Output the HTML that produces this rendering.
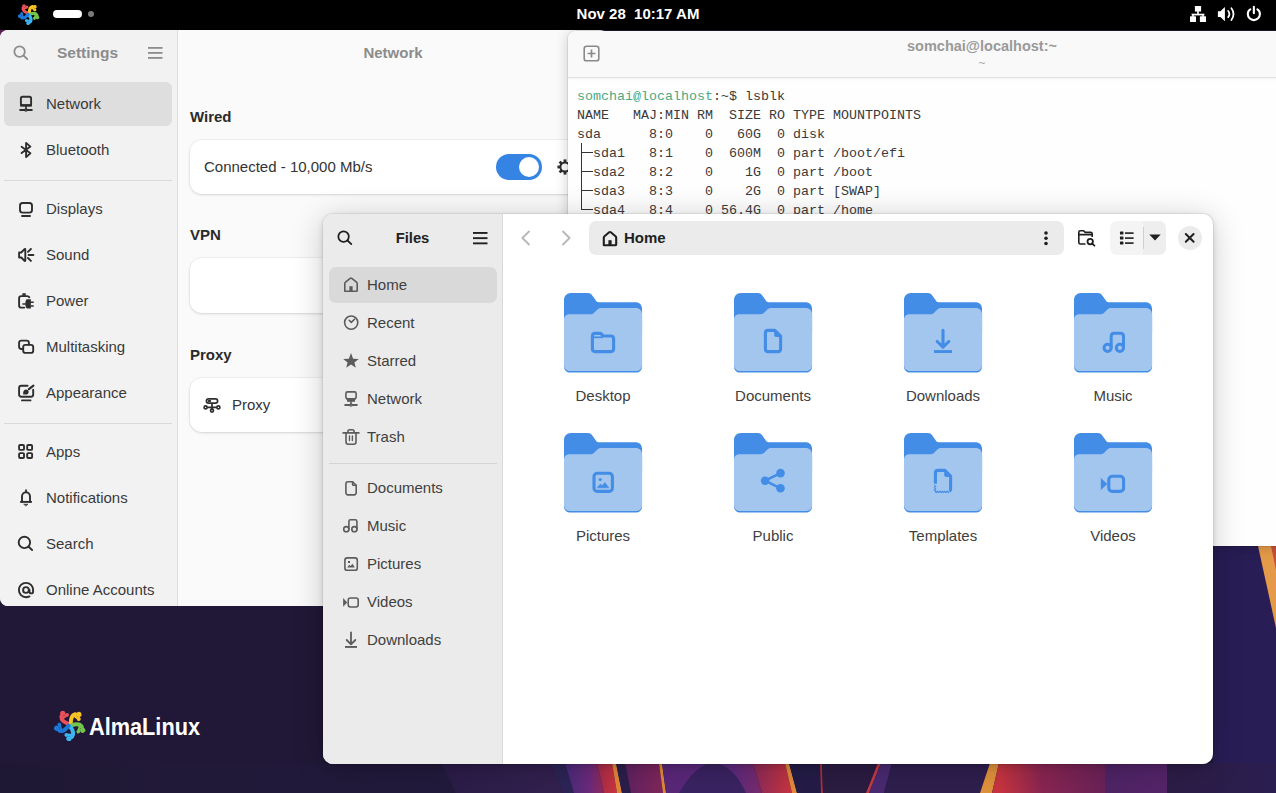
<!DOCTYPE html>
<html><head><meta charset="utf-8"><style>
*{margin:0;padding:0;box-sizing:border-box}
html,body{width:1276px;height:793px;overflow:hidden;background:#211838;font-family:"Liberation Sans",sans-serif;color:#2e2e2e}
.a{position:absolute}
#wall{left:0;top:0;width:1276px;height:793px;overflow:hidden}
#topbar{left:0;top:0;width:1276px;height:30px;background:#000}
#clock{left:0;width:1276px;top:5px;text-align:center;color:#fff;font-weight:bold;font-size:15px;line-height:18px;white-space:pre;padding-left:0}
#set{left:0;top:30px;width:608px;height:576px;background:#fafafa;border-radius:8px;overflow:hidden}
#setside{left:0;top:0;width:178px;height:576px;background:#f2f2f2;border-right:1px solid #dddddd}
.t15{font-size:15px;white-space:nowrap}
.sep{height:1px;background:#d9d9d9}
.card{background:#fff;border-radius:12px;box-shadow:0 0 0 1px rgba(0,0,0,.03),0 1px 3px rgba(0,0,0,.12)}
#term{left:568px;top:31px;width:830px;height:515px;background:#fefefe;border-radius:8px 8px 0 0;overflow:hidden;box-shadow:0 0 0 1px rgba(0,0,0,.07),0 1px 14px rgba(0,0,0,.2)}
#termhead{left:0;top:0;width:830px;height:47px;background:#f9f9f9;border-bottom:1px solid #e0e0e0;box-shadow:0 1px 3px rgba(0,0,0,.05);z-index:1}
#termtxt{left:9px;top:56px;font-family:"Liberation Mono",monospace;font-size:13.333px;line-height:19px;white-space:pre;color:#3a3a3a}
#files{left:323px;top:213.7px;width:890px;height:550.3px;background:#fff;border-radius:10px;overflow:hidden;box-shadow:0 0 0 1px rgba(0,0,0,.06),0 2px 6px rgba(0,0,0,.12),0 4px 32px rgba(0,0,0,.2)}
#fside{left:0;top:0;width:180px;height:550px;background:#ebebeb;border-right:1px solid #dadada}
.flbl{width:170px;text-align:center;font-size:15px;line-height:18px;color:#404040}
</style></head><body>
<div id="wall" class="a">
<svg class="a" style="left:0;top:0" width="1276" height="793" viewBox="0 0 1276 793"><defs><linearGradient id="g1" gradientUnits="userSpaceOnUse" x1="0" y1="0" x2="450" y2="0"><stop offset="0" stop-color="#1f1834"/><stop offset="1" stop-color="#221a3c"/></linearGradient><linearGradient id="g2" gradientUnits="userSpaceOnUse" x1="445" y1="0" x2="560" y2="0"><stop offset="0" stop-color="#2a1c48"/><stop offset="1" stop-color="#33204f"/></linearGradient><linearGradient id="g3" gradientUnits="userSpaceOnUse" x1="566" y1="0" x2="604" y2="0"><stop offset="0" stop-color="#4a2a7a"/><stop offset="0.6" stop-color="#6a2a7c"/><stop offset="1" stop-color="#92295c"/></linearGradient><linearGradient id="g4" gradientUnits="userSpaceOnUse" x1="600" y1="0" x2="616" y2="0"><stop offset="0" stop-color="#a82c4c"/><stop offset="1" stop-color="#cc343e"/></linearGradient><linearGradient id="g5" gradientUnits="userSpaceOnUse" x1="625" y1="0" x2="663" y2="0"><stop offset="0" stop-color="#5e2262"/><stop offset="1" stop-color="#82265a"/></linearGradient><linearGradient id="g6" gradientUnits="userSpaceOnUse" x1="662" y1="0" x2="762" y2="0"><stop offset="0" stop-color="#5a2778"/><stop offset="0.7" stop-color="#5c2a80"/><stop offset="1" stop-color="#7a2a6a"/></linearGradient><linearGradient id="g7" gradientUnits="userSpaceOnUse" x1="753" y1="0" x2="792" y2="0"><stop offset="0" stop-color="#8a2a5a"/><stop offset="1" stop-color="#c8343f"/></linearGradient><linearGradient id="g8" gradientUnits="userSpaceOnUse" x1="1000" y1="0" x2="1105" y2="0"><stop offset="0" stop-color="#c8343f"/><stop offset="0.4" stop-color="#8a2552"/><stop offset="1" stop-color="#6a2258"/></linearGradient><linearGradient id="g9" gradientUnits="userSpaceOnUse" x1="1105" y1="0" x2="1167" y2="0"><stop offset="0" stop-color="#4e2466"/><stop offset="1" stop-color="#55246a"/></linearGradient><linearGradient id="g10" gradientUnits="userSpaceOnUse" x1="1167" y1="0" x2="1276" y2="0"><stop offset="0" stop-color="#2c1d46"/><stop offset="1" stop-color="#2a1e50"/></linearGradient></defs><rect width="1276" height="793" fill="#201836"/><rect x="0" y="28" width="10" height="12" fill="#5a1f55"/><path d="M0 763 L441 763 L456 793 L0 793Z" fill="url(#g1)"/><path d="M441 763 L550 763 L563 793 L456 793Z" fill="url(#g2)"/><path d="M550 763 L565 763 L574 793 L563 793Z" fill="#2c2456"/><path d="M565 763 L597 763 L604 793 L574 793Z" fill="url(#g3)"/><path d="M597 763 L612 763 L617 793 L604 793Z" fill="url(#g4)"/><path d="M612 763 L616 763 L622 793 L617 793Z" fill="#e5863c"/><path d="M616 763 L625 763 L631 793 L622 793Z" fill="#2a1f4c"/><path d="M625 763 L659 763 L663 793 L631 793Z" fill="url(#g5)"/><path d="M659 763 L662 763 L666 793 L663 793Z" fill="#e08a3c"/><path d="M662 763 L753 763 L762 793 L666 793Z" fill="url(#g6)"/><path d="M753 763 L785 763 L792 793 L762 793Z" fill="url(#g7)"/><path d="M785 763 L789 763 L797 793 L792 793Z" fill="#e38a3c"/><path d="M789 763 L820 763 L821 793 L797 793Z" fill="#241c48"/><path d="M820 763 L822 763 L823 793 L821 793Z" fill="#a83242"/><path d="M822 763 L878 763 L866 793 L823 793Z" fill="#2b1c42"/><path d="M878 763 L881 763 L869 793 L866 793Z" fill="#c23a44"/><path d="M881 763 L892 763 L884 793 L869 793Z" fill="#4a2a72"/><path d="M892 763 L990 763 L980 793 L884 793Z" fill="#2e1f4e"/><path d="M990 763 L999 763 L992 793 L980 793Z" fill="#e0923c"/><path d="M999 763 L1105 763 L1105 793 L992 793Z" fill="url(#g8)"/><path d="M1105 763 L1167 763 L1167 793 L1105 793Z" fill="url(#g9)"/><path d="M1167 763 L1276 763 L1276 793 L1167 793Z" fill="url(#g10)"/><path d="M679 793C690 775 700 764 712 763C726 763 738 775 746 793Z" fill="#3a2362"/><path d="M1213 546 L1276 546 L1276 763 L1213 763Z" fill="#281d55"/><path d="M1258 546 L1276 546 L1276 628Z" fill="#e49a48"/><path d="M1271 546 L1276 546 L1276 570Z" fill="#c8503c"/></svg>
<svg class="a" style="left:54.2px;top:709.2px" width="32.0" height="32.0" viewBox="-16 -16 32 32"><g transform="rotate(0)" fill="#e9525a" stroke="#e9525a"><path d="M-1 -1.2C-4.6 -2.2 -8.8 -4 -8.6 -8.4" fill="none" stroke-width="3.9599999999999995" stroke-linecap="round"/><path d="M-7.6 -6.8L-3.4 -9.6" fill="none" stroke-width="2.4" stroke-linecap="round"/><circle cx="-2.9" cy="-10.2" r="1.92" stroke="none"/><circle cx="-7.2" cy="-11.7" r="2.64" stroke="none"/></g><g transform="rotate(72)" fill="#f7c326" stroke="#f7c326"><path d="M-1 -1.2C-4.6 -2.2 -8.8 -4 -8.6 -8.4" fill="none" stroke-width="3.9599999999999995" stroke-linecap="round"/><path d="M-7.6 -6.8L-3.4 -9.6" fill="none" stroke-width="2.4" stroke-linecap="round"/><circle cx="-2.9" cy="-10.2" r="1.92" stroke="none"/><circle cx="-7.2" cy="-11.7" r="2.64" stroke="none"/></g><g transform="rotate(144)" fill="#73c54b" stroke="#73c54b"><path d="M-1 -1.2C-4.6 -2.2 -8.8 -4 -8.6 -8.4" fill="none" stroke-width="3.9599999999999995" stroke-linecap="round"/><path d="M-7.6 -6.8L-3.4 -9.6" fill="none" stroke-width="2.4" stroke-linecap="round"/><circle cx="-2.9" cy="-10.2" r="1.92" stroke="none"/><circle cx="-7.2" cy="-11.7" r="2.64" stroke="none"/></g><g transform="rotate(216)" fill="#3cb5f0" stroke="#3cb5f0"><path d="M-1 -1.2C-4.6 -2.2 -8.8 -4 -8.6 -8.4" fill="none" stroke-width="3.9599999999999995" stroke-linecap="round"/><path d="M-7.6 -6.8L-3.4 -9.6" fill="none" stroke-width="2.4" stroke-linecap="round"/><circle cx="-2.9" cy="-10.2" r="1.92" stroke="none"/><circle cx="-7.2" cy="-11.7" r="2.64" stroke="none"/></g><g transform="rotate(288)" fill="#1d78d8" stroke="#1d78d8"><path d="M-1 -1.2C-4.6 -2.2 -8.8 -4 -8.6 -8.4" fill="none" stroke-width="3.9599999999999995" stroke-linecap="round"/><path d="M-7.6 -6.8L-3.4 -9.6" fill="none" stroke-width="2.4" stroke-linecap="round"/><circle cx="-2.9" cy="-10.2" r="1.92" stroke="none"/><circle cx="-7.2" cy="-11.7" r="2.64" stroke="none"/></g></svg>
<div class="a" style="left:89px;top:714px;font-weight:bold;font-size:23px;line-height:26px;color:#fff;transform:scaleX(0.944);transform-origin:0 0;letter-spacing:0">AlmaLinux</div>
</div>
<div id="set" class="a">
<div id="setside" class="a">
<svg class="a" style="left:11px;top:13px" width="20" height="20" viewBox="0 0 24 24" fill="none" stroke="#8c8c8c" stroke-width="2.1" stroke-linecap="round" stroke-linejoin="round" ><circle cx="10.3" cy="10.3" r="6.3"/><path d="M15 15L19.6 19.4"/></svg>
<div class="a" style="left:0;width:175px;top:14px;text-align:center;font-weight:bold;font-size:15.5px;line-height:18px;color:#8c8c8c">Settings</div>
<svg class="a" style="left:148px;top:17px" width="15" height="12" viewBox="0 0 15 12" fill="#8c8c8c"><rect x="0" y="0" width="14.5" height="1.8"/><rect x="0" y="5" width="14.5" height="1.8"/><rect x="0" y="10" width="14.5" height="1.8"/></svg>
<div class="a" style="left:4px;top:52px;width:168px;height:43.6px;background:#dedede;border-radius:6px"></div>
<div class="a sep" style="left:4px;top:150px;width:168px"></div>
<div class="a sep" style="left:4px;top:393px;width:168px"></div>
<svg class="a" style="left:14px;top:62px" width="24" height="24" viewBox="0 0 24 24" fill="none" stroke="#2e2e2e" stroke-width="1.9" stroke-linecap="round" stroke-linejoin="round" ><rect x="6.9" y="4.8" width="10.2" height="8.8" rx="1.6"/><rect x="6" y="12.1" width="12" height="2.3" fill="#2e2e2e" stroke="none"/><path d="M12 14.5V17.2" stroke-width="1.6"/><path d="M6.2 18H10.6M13.4 18H17.8" stroke-width="2"/><circle cx="12" cy="18" r="1.2" stroke-width="1.2"/></svg>
<div class="a t15" style="left:46px;top:65px;line-height:18px;color:#3a3a3a">Network</div>
<svg class="a" style="left:14px;top:108px" width="24" height="24" viewBox="0 0 24 24" fill="none" stroke="#2e2e2e" stroke-width="1.9" stroke-linecap="round" stroke-linejoin="round" ><path d="M7.6 8.8L16.4 15.3L12.1 19.1V4.9L16.4 8.6L7.6 15.1"/></svg>
<div class="a t15" style="left:46px;top:111px;line-height:18px;color:#3a3a3a">Bluetooth</div>
<svg class="a" style="left:14px;top:167px" width="24" height="24" viewBox="0 0 24 24" fill="none" stroke="#2e2e2e" stroke-width="1.9" stroke-linecap="round" stroke-linejoin="round" ><rect x="6" y="6" width="12" height="9.6" rx="2.6"/><path d="M8 19H16" stroke-width="1.9"/></svg>
<div class="a t15" style="left:46px;top:170px;line-height:18px;color:#3a3a3a">Displays</div>
<svg class="a" style="left:14px;top:213px" width="24" height="24" viewBox="0 0 24 24" fill="none" stroke="#2e2e2e" stroke-width="1.9" stroke-linecap="round" stroke-linejoin="round" ><path d="M5.1 9.5H7.3L10.5 6.1C10.8 5.8 11.3 6 11.3 6.4V17.6C11.3 18 10.8 18.2 10.5 17.9L7.3 14.5H5.1Z"/><path d="M14 8.9L16.9 6M14.6 12H19.4M14 15L16.9 17.9"/></svg>
<div class="a t15" style="left:46px;top:216px;line-height:18px;color:#3a3a3a">Sound</div>
<svg class="a" style="left:14px;top:259px" width="24" height="24" viewBox="0 0 24 24" fill="none" stroke="#2e2e2e" stroke-width="1.9" stroke-linecap="round" stroke-linejoin="round" ><path d="M15.3 8.3C14.9 7.6 14.2 7.1 13.3 7.1H7.3C6 7.1 5.1 8 5.1 9.3V16.4C5.1 17.7 6 18.6 7.3 18.6H10.3"/><rect x="8.3" y="4.3" width="3.5" height="2.4" rx="0.5" fill="#2e2e2e" stroke="none"/><path d="M13.2 10.3H16.9V19.4H13.2C12 19.4 11.3 17.4 11.3 14.85C11.3 12.3 12 10.3 13.2 10.3Z" fill="#2e2e2e" stroke="none"/><path d="M16.6 13.2H19.7M16.6 17H19.7M8.4 14.9H11.6" stroke-linecap="butt" stroke-width="1.5"/></svg>
<div class="a t15" style="left:46px;top:262px;line-height:18px;color:#3a3a3a">Power</div>
<svg class="a" style="left:14px;top:305px" width="24" height="24" viewBox="0 0 24 24" fill="none" stroke="#2e2e2e" stroke-width="1.9" stroke-linecap="round" stroke-linejoin="round" ><path d="M8.6 14H7.2C6 14 5.1 13.1 5.1 11.9V7.7C5.1 6.5 6 5.6 7.2 5.6H12.8C14 5.6 14.9 6.5 14.9 7.7V9.6"/><rect x="9.2" y="9.9" width="10" height="8" rx="2.2"/></svg>
<div class="a t15" style="left:46px;top:308px;line-height:18px;color:#3a3a3a">Multitasking</div>
<svg class="a" style="left:14px;top:351px" width="24" height="24" viewBox="0 0 24 24" fill="none" stroke="#2e2e2e" stroke-width="1.9" stroke-linecap="round" stroke-linejoin="round" ><path d="M13.6 4.8H7.4C6 4.8 5.1 5.7 5.1 7.1V13.6C5.1 15 6 15.8 7.4 15.8H17C18.4 15.8 19.2 15 19.2 13.6V8.8"/><path d="M8 19.4H16.5" stroke-width="1.9"/><path d="M14.9 8.2L19.4 4.6" stroke-width="2.2"/><path d="M9.2 13.6V11.5C9.2 9.8 10.4 8.4 12 8.4C13.6 8.4 14.7 9.6 14.7 11C14.7 12.6 13.3 13.6 11.6 13.6Z" fill="#2e2e2e" stroke="none"/></svg>
<div class="a t15" style="left:46px;top:354px;line-height:18px;color:#3a3a3a">Appearance</div>
<svg class="a" style="left:14px;top:410px" width="24" height="24" viewBox="0 0 24 24" fill="none" stroke="#2e2e2e" stroke-width="1.9" stroke-linecap="round" stroke-linejoin="round" ><rect x="5.1" y="5" width="4.9" height="4.9" rx="1"/><rect x="13.2" y="5" width="4.9" height="4.9" rx="1"/><rect x="5.1" y="13.1" width="4.9" height="4.9" rx="1"/><rect x="13.2" y="13.1" width="4.9" height="4.9" rx="1"/></svg>
<div class="a t15" style="left:46px;top:413px;line-height:18px;color:#3a3a3a">Apps</div>
<svg class="a" style="left:14px;top:456px" width="24" height="24" viewBox="0 0 24 24" fill="none" stroke="#2e2e2e" stroke-width="1.9" stroke-linecap="round" stroke-linejoin="round" ><path d="M8 15.7V10.5C8 8.1 9.8 6.2 12 6.2C14.2 6.2 16 8.1 16 10.5V15.7"/><path d="M6.1 15.9H17.9" stroke-width="1.9" stroke-linecap="butt"/><path d="M12 4.2V6" stroke-width="1.8"/><path d="M10 18.2H14L12 19.8Z" fill="#2e2e2e" stroke-width="0.6"/></svg>
<div class="a t15" style="left:46px;top:459px;line-height:18px;color:#3a3a3a">Notifications</div>
<svg class="a" style="left:14px;top:502px" width="24" height="24" viewBox="0 0 24 24" fill="none" stroke="#2e2e2e" stroke-width="1.9" stroke-linecap="round" stroke-linejoin="round" ><circle cx="10.4" cy="10.4" r="5.7"/><path d="M14.6 14.8L18.1 18"/></svg>
<div class="a t15" style="left:46px;top:505px;line-height:18px;color:#3a3a3a">Search</div>
<svg class="a" style="left:14px;top:548px" width="24" height="24" viewBox="0 0 24 24" fill="none" stroke="#2e2e2e" stroke-width="1.9" stroke-linecap="round" stroke-linejoin="round" ><path d="M15.5 18.4C14.4 18.9 13.2 19.2 12 19.2C8 19.2 4.9 16 4.9 12C4.9 8 8 4.9 12 4.9C16 4.9 19.1 8 19.1 12V13.4C19.1 14.6 18.3 15.4 17.3 15.4C16.3 15.4 15.5 14.6 15.5 13.4V12"/><circle cx="12" cy="12" r="2.9"/></svg>
<div class="a t15" style="left:46px;top:551px;line-height:18px;color:#3a3a3a">Online Accounts</div>
</div>
<div class="a" style="left:178px;width:430px;top:14px;text-align:center;font-weight:bold;font-size:15px;line-height:18px;color:#8c8c8c">Network</div>
<div class="a" style="left:190px;top:78px;font-weight:bold;font-size:15px;line-height:18px;color:#2a2a2a">Wired</div>
<div class="a card" style="left:190px;top:110px;width:420px;height:54px"></div>
<div class="a t15" style="left:204px;top:128px;line-height:18px;color:#333">Connected - 10,000 Mb/s</div>
<div class="a" style="left:496px;top:124px;width:46px;height:26px;border-radius:13px;background:#3584e4"></div>
<div class="a" style="left:519px;top:127px;width:20px;height:20px;border-radius:10px;background:#fff"></div>
<svg class="a" style="left:556px;top:128px" width="18" height="18" viewBox="0 0 18 18"><g fill="#2e2e2e"><circle cx="9" cy="9" r="5.6"/><rect x="7.6" y="1.4" width="2.8" height="3" transform="rotate(0 9 9)"/><rect x="7.6" y="1.4" width="2.8" height="3" transform="rotate(45 9 9)"/><rect x="7.6" y="1.4" width="2.8" height="3" transform="rotate(90 9 9)"/><rect x="7.6" y="1.4" width="2.8" height="3" transform="rotate(135 9 9)"/><rect x="7.6" y="1.4" width="2.8" height="3" transform="rotate(180 9 9)"/><rect x="7.6" y="1.4" width="2.8" height="3" transform="rotate(225 9 9)"/><rect x="7.6" y="1.4" width="2.8" height="3" transform="rotate(270 9 9)"/><rect x="7.6" y="1.4" width="2.8" height="3" transform="rotate(315 9 9)"/></g><circle cx="9" cy="9" r="3.6" fill="#fff"/></svg>
<div class="a" style="left:190px;top:196px;font-weight:bold;font-size:15px;line-height:18px;color:#2a2a2a">VPN</div>
<div class="a card" style="left:190px;top:228px;width:420px;height:55px"></div>
<div class="a" style="left:190px;top:316px;font-weight:bold;font-size:15px;line-height:18px;color:#2a2a2a">Proxy</div>
<div class="a card" style="left:190px;top:348px;width:420px;height:54px"></div>
<svg class="a" style="left:203px;top:366px" width="18" height="18" viewBox="0 0 18 18" fill="none" stroke="#2e2e2e" stroke-width="1.7"><rect x="3.4" y="2.8" width="11.2" height="4.4" rx="2.2"/><rect x="4.6" y="4" width="3.6" height="2" rx="1" fill="#2e2e2e" stroke="none"/><path d="M9 7.2V13.2M4 11.4H14"/><circle cx="2.6" cy="11.4" r="1.5" fill="#fff"/><circle cx="15.4" cy="11.4" r="1.5" fill="#fff"/><circle cx="9" cy="14.6" r="1.5" fill="#fff"/></svg>
<div class="a t15" style="left:232px;top:366px;line-height:18px;color:#333">Proxy</div>
</div>
<div id="term" class="a">
<div id="termhead" class="a">
<svg class="a" style="left:15px;top:14px" width="17" height="17" viewBox="0 0 17 17" fill="none" stroke="#8a8a8a" stroke-width="1.6"><rect x="1.2" y="1.2" width="14.6" height="14.6" rx="2.4"/><path d="M8.5 4.6V12.4M4.6 8.5H12.4" stroke-width="1.7"/></svg>
<div class="a" style="left:-1px;width:830px;top:6px;text-align:center;font-weight:bold;font-size:14.5px;line-height:18px;color:#999">somchai@localhost:~</div>
<div class="a" style="left:-1px;width:830px;top:25px;text-align:center;font-size:12px;line-height:14px;color:#aaa">~</div>
</div>
<div id="termtxt" class="a"><span style="color:#4aa983">somchai@localhost</span>:~$ lsblk
NAME   MAJ:MIN RM  SIZE RO TYPE MOUNTPOINTS
sda      8:0    0   60G  0 disk
  sda1   8:1    0  600M  0 part /boot/efi
  sda2   8:2    0    1G  0 part /boot
  sda3   8:3    0    2G  0 part [SWAP]
  sda4   8:4    0 56.4G  0 part /home</div>
<div class="a" style="left:13px;top:112px;width:1.3px;height:67px;background:#333"></div>
<div class="a" style="left:13px;top:120.70000000000002px;width:12px;height:1.3px;background:#333"></div>
<div class="a" style="left:13px;top:139.70000000000002px;width:12px;height:1.3px;background:#333"></div>
<div class="a" style="left:13px;top:158.70000000000002px;width:12px;height:1.3px;background:#333"></div>
<div class="a" style="left:13px;top:177.70000000000002px;width:12px;height:1.3px;background:#333"></div>
</div>
<div id="files" class="a">
<div id="fside" class="a">
<svg class="a" style="left:12px;top:14px" width="20" height="20" viewBox="0 0 24 24" fill="none" stroke="#1f1f1f" stroke-width="2.1" stroke-linecap="round" stroke-linejoin="round" ><circle cx="10.3" cy="10.3" r="6.3"/><path d="M15 15L19.6 19.4"/></svg>
<div class="a" style="left:0;width:179px;top:15.4px;text-align:center;font-weight:bold;font-size:14.8px;line-height:18px;color:#222">Files</div>
<svg class="a" style="left:150px;top:18px" width="15" height="13" viewBox="0 0 15 13" fill="#222"><rect x="0" y="0" width="14.5" height="1.9"/><rect x="0" y="5.2" width="14.5" height="1.9"/><rect x="0" y="10.4" width="14.5" height="1.9"/></svg>
<div class="a" style="left:6px;top:53px;width:168px;height:36px;background:#d9d9d9;border-radius:7px"></div>
<div class="a sep" style="left:6px;top:249px;width:168px;background:#d4d4d4"></div>
<svg class="a" style="left:16px;top:59px" width="24" height="24" viewBox="0 0 24 24" fill="none" stroke="#5c5c5c" stroke-width="1.6" stroke-linecap="round" stroke-linejoin="round" ><path d="M5.8 18.2V10.6C5.8 10 6 9.6 6.5 9.2L11.2 5.3C11.7 4.9 12.3 4.9 12.8 5.3L17.5 9.2C18 9.6 18.2 10 18.2 10.6V17.6C18.2 18 17.9 18.3 17.5 18.3H6.5C6.1 18.3 5.8 18 5.8 17.6Z"/><rect x="10.4" y="13.2" width="3.2" height="5.6" fill="#5c5c5c" stroke="none"/></svg>
<div class="a t15" style="left:44px;top:62px;line-height:18px;color:#404040">Home</div>
<svg class="a" style="left:16px;top:97px" width="24" height="24" viewBox="0 0 24 24" fill="none" stroke="#5c5c5c" stroke-width="1.6" stroke-linecap="round" stroke-linejoin="round" ><circle cx="12.2" cy="11.6" r="6.6"/><path d="M10.2 9.3L12.3 11.4L15.5 8.2"/></svg>
<div class="a t15" style="left:44px;top:100px;line-height:18px;color:#404040">Recent</div>
<svg class="a" style="left:16px;top:135px" width="24" height="24" viewBox="0 0 24 24" fill="none" stroke="#5c5c5c" stroke-width="1.6" stroke-linecap="round" stroke-linejoin="round" ><path d="M12 4.1L14.1 9.7L19.8 9.9L15.4 13.5L16.8 18.7L12 15.6L7.2 18.7L8.6 13.5L4.2 9.9L9.9 9.7Z" fill="#5c5c5c" stroke="none"/></svg>
<div class="a t15" style="left:44px;top:138px;line-height:18px;color:#404040">Starred</div>
<svg class="a" style="left:16px;top:173px" width="24" height="24" viewBox="0 0 24 24" fill="none" stroke="#5c5c5c" stroke-width="1.6" stroke-linecap="round" stroke-linejoin="round" ><rect x="6.9" y="4.9" width="10.2" height="7" rx="1.6"/><path d="M7 12.2H17L15.8 13.2V14.6H8.2V13.2Z" fill="#5c5c5c" stroke="none"/><rect x="8" y="11.4" width="8" height="3.2" fill="#5c5c5c" stroke="none"/><path d="M12 14.5V17.2" stroke-width="1.6"/><path d="M6.2 18H10.6M13.4 18H17.8" stroke-width="2"/><circle cx="12" cy="18" r="1.2" stroke-width="1.2"/></svg>
<div class="a t15" style="left:44px;top:176px;line-height:18px;color:#404040">Network</div>
<svg class="a" style="left:16px;top:211px" width="24" height="24" viewBox="0 0 24 24" fill="none" stroke="#5c5c5c" stroke-width="1.6" stroke-linecap="round" stroke-linejoin="round" ><path d="M4.2 7.9H19.8" stroke-width="1.8"/><path d="M8.9 7.6V6.4C8.9 5.2 9.6 4.7 10.6 4.7H13.4C14.4 4.7 15.1 5.2 15.1 6.4V7.6"/><path d="M7 8V16.8C7 18.4 8 19.3 9.4 19.3H14.6C16 19.3 17 18.4 17 16.8V8"/><path d="M10.5 10.9V15.6M13.4 10.9V15.6" stroke-width="1.4"/></svg>
<div class="a t15" style="left:44px;top:214px;line-height:18px;color:#404040">Trash</div>
<svg class="a" style="left:16px;top:262px" width="24" height="24" viewBox="0 0 24 24" fill="none" stroke="#5c5c5c" stroke-width="1.6" stroke-linecap="round" stroke-linejoin="round" ><path d="M9 5.8H13.6L17.2 9.3V16.6C17.2 18 16.3 18.9 15 18.9H9C7.7 18.9 6.9 18 6.9 16.6V8C6.9 6.6 7.7 5.8 9 5.8Z"/><path d="M13.6 6V8.4C13.6 9 14 9.3 14.6 9.3H17"/></svg>
<div class="a t15" style="left:44px;top:265px;line-height:18px;color:#404040">Documents</div>
<svg class="a" style="left:16px;top:300px" width="24" height="24" viewBox="0 0 24 24" fill="none" stroke="#5c5c5c" stroke-width="1.6" stroke-linecap="round" stroke-linejoin="round" ><path d="M9.9 15.2V7.4C9.9 6.4 10.5 5.8 11.5 5.8H16.2C17.2 5.8 17.9 6.4 17.9 7.4V15.2"/><circle cx="7.3" cy="15.2" r="2.6"/><circle cx="15.4" cy="15.2" r="2.6"/></svg>
<div class="a t15" style="left:44px;top:303px;line-height:18px;color:#404040">Music</div>
<svg class="a" style="left:16px;top:338px" width="24" height="24" viewBox="0 0 24 24" fill="none" stroke="#5c5c5c" stroke-width="1.6" stroke-linecap="round" stroke-linejoin="round" ><rect x="5.9" y="5.9" width="12.4" height="12.4" rx="2.4"/><rect x="9" y="9" width="2" height="2" fill="#5c5c5c" stroke="none"/><path d="M8.2 15.6L10.3 12.8L11.6 14L13.5 11.8L15.8 15.6Z" fill="#5c5c5c" stroke="none"/></svg>
<div class="a t15" style="left:44px;top:341px;line-height:18px;color:#404040">Pictures</div>
<svg class="a" style="left:16px;top:376px" width="24" height="24" viewBox="0 0 24 24" fill="none" stroke="#5c5c5c" stroke-width="1.6" stroke-linecap="round" stroke-linejoin="round" ><rect x="9.2" y="8" width="10" height="9" rx="2.2"/><path d="M4.1 8.1L8.2 12.4L4.1 16.7Z" fill="#5c5c5c" stroke="none"/></svg>
<div class="a t15" style="left:44px;top:379px;line-height:18px;color:#404040">Videos</div>
<svg class="a" style="left:16px;top:414px" width="24" height="24" viewBox="0 0 24 24" fill="none" stroke="#5c5c5c" stroke-width="1.6" stroke-linecap="round" stroke-linejoin="round" ><path d="M12 4.5V16M7.7 12L12 16.4L16.3 12" stroke-width="1.8"/><rect x="6" y="18" width="12" height="1.9" fill="#5c5c5c" stroke="none"/></svg>
<div class="a t15" style="left:44px;top:417px;line-height:18px;color:#404040">Downloads</div>
</div>
<svg class="a" style="left:197px;top:16px" width="12" height="16" viewBox="0 0 12 16" fill="none" stroke="#b8b8b8" stroke-width="1.9" stroke-linecap="round" stroke-linejoin="round"><path d="M9 1.5L2.4 8L9 14.5"/></svg>
<svg class="a" style="left:237px;top:16px" width="12" height="16" viewBox="0 0 12 16" fill="none" stroke="#b8b8b8" stroke-width="1.9" stroke-linecap="round" stroke-linejoin="round"><path d="M3 1.5L9.6 8L3 14.5"/></svg>
<div class="a" style="left:266px;top:7px;width:475px;height:34px;background:#ebebeb;border-radius:7px"></div>
<svg class="a" style="left:275px;top:13px" width="24" height="24" viewBox="0 0 24 24" fill="none" stroke="#1f1f1f" stroke-width="2.1" stroke-linecap="round" stroke-linejoin="round" ><path d="M5.8 18.2V10.6C5.8 10 6 9.6 6.5 9.2L11.2 5.3C11.7 4.9 12.3 4.9 12.8 5.3L17.5 9.2C18 9.6 18.2 10 18.2 10.6V17.6C18.2 18 17.9 18.3 17.5 18.3H6.5C6.1 18.3 5.8 18 5.8 17.6Z"/><rect x="10.4" y="13.2" width="3.2" height="5.6" fill="#1f1f1f" stroke="none"/></svg>
<div class="a" style="left:301px;top:15px;font-weight:bold;font-size:15px;line-height:18px;color:#1f1f1f">Home</div>
<svg class="a" style="left:719px;top:16px" width="8" height="16" viewBox="0 0 8 16" fill="#1f1f1f"><circle cx="4" cy="3" r="1.8"/><circle cx="4" cy="8.3" r="1.8"/><circle cx="4" cy="13.5" r="1.8"/></svg>
<svg class="a" style="left:754px;top:15px" width="20" height="18" viewBox="0 0 20 18" fill="none" stroke="#1f1f1f" stroke-width="1.6" stroke-linejoin="round"><path d="M8.5 15H3.4C2.4 15 1.8 14.3 1.8 13.4V3.2C1.8 2.4 2.4 1.8 3.2 1.8H6.6L8.2 3.4H13.6C14.6 3.4 15.2 4 15.2 5V8"/><path d="M1.8 5.6H15" stroke-width="1.6"/><circle cx="13.2" cy="12.6" r="2.7" stroke-width="1.8"/><path d="M15.2 14.6L17.4 16.6" stroke-width="1.9" stroke-linecap="round"/></svg>
<div class="a" style="left:787px;top:7px;width:56px;height:34px;background:#f4f4f4;border-radius:7px"></div>
<div class="a" style="left:820px;top:7px;width:23px;height:34px;background:#eeeeee;border-radius:0 7px 7px 0"></div>
<div class="a" style="left:820px;top:13px;width:1px;height:22px;background:#cfcfcf"></div>
<svg class="a" style="left:796px;top:16px" width="16" height="16" viewBox="0 0 16 16" fill="#1f1f1f"><rect x="1" y="1.6" width="3.4" height="3" rx="0.6"/><rect x="1" y="6.6" width="3.4" height="3" rx="0.6"/><rect x="1" y="11.6" width="3.4" height="3" rx="0.6"/><rect x="6" y="2.3" width="8.6" height="1.6"/><rect x="6" y="7.3" width="8.6" height="1.6"/><rect x="6" y="12.3" width="8.6" height="1.6"/></svg>
<svg class="a" style="left:825px;top:19px" width="14" height="9" viewBox="0 0 14 9" fill="#1f1f1f"><path d="M1.3 1.6H12.7L7 7.6Z"/></svg>
<div class="a" style="left:855px;top:12px;width:24px;height:24px;border-radius:12px;background:#ebebeb"></div>
<svg class="a" style="left:861px;top:18px" width="12" height="12" viewBox="0 0 12 12" stroke="#1f1f1f" stroke-width="2" stroke-linecap="round"><path d="M1.8 2L9.6 9.8M9.6 2L1.8 9.8"/></svg>
<svg class="a" style="left:241px;top:79.3px" width="80" height="84" viewBox="0 0 80 84"><g transform="scale(0.988 1)"><path d="M0 7C0 3 3 0 7 0H24C26.5 0 27.8 1.2 29 3L31.5 6.6C32.4 8.2 33.4 9.2 35 9.2H72C76.4 9.2 79 11.8 79 16.2V40H0Z" fill="#438de6"/><path d="M0 78.6V26.6C0 23 2.6 21.2 6 21.2H26.5C28.6 21.2 29.6 20.6 31 19.2L33.5 16.8C35 15.4 36 15 38 15H72.4C76.4 15 79 17.6 79 21.6V73.5C79 77 76.6 79.6 73 79.6H6C2.6 79.6 0 77 0 73.5Z" fill="#438de6"/><path d="M0 26.6C0 23 2.6 21.2 6 21.2H26.5C28.6 21.2 29.6 20.6 31 19.2L33.5 16.8C35 15.4 36 15 38 15H72.4C76.4 15 79 17.6 79 21.6V72C79 75.6 76.6 78 73 78H6C2.6 78 0 75.6 0 72Z" fill="#a3c6ef"/></g><g transform="translate(39 49.5)"><path d="M-7.8 -9.1H-3.2C-2.4 -9.1 -1.8 -8.8 -1.3 -8.2L0 -6.5H7.8C9.4 -6.5 10.6 -5.3 10.6 -3.7V6.3C10.6 7.9 9.4 9.1 7.8 9.1H-7.8C-9.4 9.1 -10.6 7.9 -10.6 6.3V-6.3C-10.6 -7.9 -9.4 -9.1 -7.8 -9.1Z" fill="none" stroke="#438de6" stroke-width="3.1" stroke-linejoin="round"/><path d="M-10.6 -5.2H-0.4" stroke="#438de6" stroke-width="1.8"/></g></svg>
<div class="a flbl" style="left:195px;top:173.3px">Desktop</div>
<svg class="a" style="left:411px;top:79.3px" width="80" height="84" viewBox="0 0 80 84"><g transform="scale(0.988 1)"><path d="M0 7C0 3 3 0 7 0H24C26.5 0 27.8 1.2 29 3L31.5 6.6C32.4 8.2 33.4 9.2 35 9.2H72C76.4 9.2 79 11.8 79 16.2V40H0Z" fill="#438de6"/><path d="M0 78.6V26.6C0 23 2.6 21.2 6 21.2H26.5C28.6 21.2 29.6 20.6 31 19.2L33.5 16.8C35 15.4 36 15 38 15H72.4C76.4 15 79 17.6 79 21.6V73.5C79 77 76.6 79.6 73 79.6H6C2.6 79.6 0 77 0 73.5Z" fill="#438de6"/><path d="M0 26.6C0 23 2.6 21.2 6 21.2H26.5C28.6 21.2 29.6 20.6 31 19.2L33.5 16.8C35 15.4 36 15 38 15H72.4C76.4 15 79 17.6 79 21.6V72C79 75.6 76.6 78 73 78H6C2.6 78 0 75.6 0 72Z" fill="#a3c6ef"/></g><g transform="translate(39 49.5)"><path d="M-5 -12.1H1.8L7.6 -6.3V6.5C7.6 8 6.5 9.1 5 9.1H-5C-6.5 9.1 -7.6 8 -7.6 6.5V-9.5C-7.6 -11 -6.5 -12.1 -5 -12.1Z" fill="none" stroke="#438de6" stroke-width="3.1" stroke-linejoin="round"/><path d="M1.2 -12.4L8 -5.6H3C2 -5.6 1.2 -6.4 1.2 -7.4Z" fill="#438de6"/></g></svg>
<div class="a flbl" style="left:365px;top:173.3px">Documents</div>
<svg class="a" style="left:581px;top:79.3px" width="80" height="84" viewBox="0 0 80 84"><g transform="scale(0.988 1)"><path d="M0 7C0 3 3 0 7 0H24C26.5 0 27.8 1.2 29 3L31.5 6.6C32.4 8.2 33.4 9.2 35 9.2H72C76.4 9.2 79 11.8 79 16.2V40H0Z" fill="#438de6"/><path d="M0 78.6V26.6C0 23 2.6 21.2 6 21.2H26.5C28.6 21.2 29.6 20.6 31 19.2L33.5 16.8C35 15.4 36 15 38 15H72.4C76.4 15 79 17.6 79 21.6V73.5C79 77 76.6 79.6 73 79.6H6C2.6 79.6 0 77 0 73.5Z" fill="#438de6"/><path d="M0 26.6C0 23 2.6 21.2 6 21.2H26.5C28.6 21.2 29.6 20.6 31 19.2L33.5 16.8C35 15.4 36 15 38 15H72.4C76.4 15 79 17.6 79 21.6V72C79 75.6 76.6 78 73 78H6C2.6 78 0 75.6 0 72Z" fill="#a3c6ef"/></g><g transform="translate(39 49.5)"><path d="M0 -12.1V4M-5.8 -1L0 4.6L5.8 -1" fill="none" stroke="#438de6" stroke-width="3.1" stroke-linecap="round" stroke-linejoin="round"/><rect x="-9" y="7.6" width="18" height="2.9" fill="#438de6"/></g></svg>
<div class="a flbl" style="left:535px;top:173.3px">Downloads</div>
<svg class="a" style="left:751px;top:79.3px" width="80" height="84" viewBox="0 0 80 84"><g transform="scale(0.988 1)"><path d="M0 7C0 3 3 0 7 0H24C26.5 0 27.8 1.2 29 3L31.5 6.6C32.4 8.2 33.4 9.2 35 9.2H72C76.4 9.2 79 11.8 79 16.2V40H0Z" fill="#438de6"/><path d="M0 78.6V26.6C0 23 2.6 21.2 6 21.2H26.5C28.6 21.2 29.6 20.6 31 19.2L33.5 16.8C35 15.4 36 15 38 15H72.4C76.4 15 79 17.6 79 21.6V73.5C79 77 76.6 79.6 73 79.6H6C2.6 79.6 0 77 0 73.5Z" fill="#438de6"/><path d="M0 26.6C0 23 2.6 21.2 6 21.2H26.5C28.6 21.2 29.6 20.6 31 19.2L33.5 16.8C35 15.4 36 15 38 15H72.4C76.4 15 79 17.6 79 21.6V72C79 75.6 76.6 78 73 78H6C2.6 78 0 75.6 0 72Z" fill="#a3c6ef"/></g><g transform="translate(39 49.5)"><path d="M-1.8 5.3V-6.2C-1.8 -8 -0.8 -9.2 1 -9.2H7.6C9.4 -9.2 10.5 -8 10.5 -6.2V5.3" fill="none" stroke="#438de6" stroke-width="3"/><circle cx="-5.4" cy="5.3" r="3.6" fill="none" stroke="#438de6" stroke-width="3"/><circle cx="6.9" cy="5.3" r="3.6" fill="none" stroke="#438de6" stroke-width="3"/></g></svg>
<div class="a flbl" style="left:705px;top:173.3px">Music</div>
<svg class="a" style="left:241px;top:219.3px" width="80" height="84" viewBox="0 0 80 84"><g transform="scale(0.988 1)"><path d="M0 7C0 3 3 0 7 0H24C26.5 0 27.8 1.2 29 3L31.5 6.6C32.4 8.2 33.4 9.2 35 9.2H72C76.4 9.2 79 11.8 79 16.2V40H0Z" fill="#438de6"/><path d="M0 78.6V26.6C0 23 2.6 21.2 6 21.2H26.5C28.6 21.2 29.6 20.6 31 19.2L33.5 16.8C35 15.4 36 15 38 15H72.4C76.4 15 79 17.6 79 21.6V73.5C79 77 76.6 79.6 73 79.6H6C2.6 79.6 0 77 0 73.5Z" fill="#438de6"/><path d="M0 26.6C0 23 2.6 21.2 6 21.2H26.5C28.6 21.2 29.6 20.6 31 19.2L33.5 16.8C35 15.4 36 15 38 15H72.4C76.4 15 79 17.6 79 21.6V72C79 75.6 76.6 78 73 78H6C2.6 78 0 75.6 0 72Z" fill="#a3c6ef"/></g><g transform="translate(39 49.5)"><rect x="-9" y="-9.2" width="18.4" height="18.1" rx="3.2" fill="none" stroke="#438de6" stroke-width="3.1"/><circle cx="-2.8" cy="-3" r="1.6" fill="#438de6"/><path d="M-5.9 5.3L-2.6 1.6L-0.8 3.2L1.8 0L5.8 5.3Z" fill="#438de6" stroke="#438de6" stroke-width="0.6" stroke-linejoin="round"/></g></svg>
<div class="a flbl" style="left:195px;top:313.3px">Pictures</div>
<svg class="a" style="left:411px;top:219.3px" width="80" height="84" viewBox="0 0 80 84"><g transform="scale(0.988 1)"><path d="M0 7C0 3 3 0 7 0H24C26.5 0 27.8 1.2 29 3L31.5 6.6C32.4 8.2 33.4 9.2 35 9.2H72C76.4 9.2 79 11.8 79 16.2V40H0Z" fill="#438de6"/><path d="M0 78.6V26.6C0 23 2.6 21.2 6 21.2H26.5C28.6 21.2 29.6 20.6 31 19.2L33.5 16.8C35 15.4 36 15 38 15H72.4C76.4 15 79 17.6 79 21.6V73.5C79 77 76.6 79.6 73 79.6H6C2.6 79.6 0 77 0 73.5Z" fill="#438de6"/><path d="M0 26.6C0 23 2.6 21.2 6 21.2H26.5C28.6 21.2 29.6 20.6 31 19.2L33.5 16.8C35 15.4 36 15 38 15H72.4C76.4 15 79 17.6 79 21.6V72C79 75.6 76.6 78 73 78H6C2.6 78 0 75.6 0 72Z" fill="#a3c6ef"/></g><g transform="translate(39 49.5)"><circle cx="-7.9" cy="-1.8" r="4.3" fill="#438de6"/><circle cx="7.5" cy="-9.4" r="4.3" fill="#438de6"/><circle cx="7.5" cy="5.8" r="4.3" fill="#438de6"/><path d="M-7.9 -1.8L7.5 -9.4M-7.9 -1.8L7.5 5.8" stroke="#438de6" stroke-width="2.6"/></g></svg>
<div class="a flbl" style="left:365px;top:313.3px">Public</div>
<svg class="a" style="left:581px;top:219.3px" width="80" height="84" viewBox="0 0 80 84"><g transform="scale(0.988 1)"><path d="M0 7C0 3 3 0 7 0H24C26.5 0 27.8 1.2 29 3L31.5 6.6C32.4 8.2 33.4 9.2 35 9.2H72C76.4 9.2 79 11.8 79 16.2V40H0Z" fill="#438de6"/><path d="M0 78.6V26.6C0 23 2.6 21.2 6 21.2H26.5C28.6 21.2 29.6 20.6 31 19.2L33.5 16.8C35 15.4 36 15 38 15H72.4C76.4 15 79 17.6 79 21.6V73.5C79 77 76.6 79.6 73 79.6H6C2.6 79.6 0 77 0 73.5Z" fill="#438de6"/><path d="M0 26.6C0 23 2.6 21.2 6 21.2H26.5C28.6 21.2 29.6 20.6 31 19.2L33.5 16.8C35 15.4 36 15 38 15H72.4C76.4 15 79 17.6 79 21.6V72C79 75.6 76.6 78 73 78H6C2.6 78 0 75.6 0 72Z" fill="#a3c6ef"/></g><g transform="translate(39 49.5)"><path d="M-7.6 1.3V-9.5C-7.6 -11 -6.5 -12.1 -5 -12.1H1.8L7.6 -6.3V6.5C7.6 7.5 7.2 8.3 6.6 8.7" fill="none" stroke="#438de6" stroke-width="3.1" stroke-linejoin="round"/><path d="M1.2 -12.4L8 -5.6H3C2 -5.6 1.2 -6.4 1.2 -7.4Z" fill="#438de6"/><path d="M-8.6 2.6l1.2 1.2l-1.2 1.2l1.2 1.2l-1.2 1.2l1.2 1.2l-0.6 0.6 M-8 8.8l1.2 1.2l1.2 -1.2l1.2 1.2l1.2 -1.2l1.2 1.2l1.2 -1.2l1.2 1.2l1.2 -1.2l1.2 1.2l1.2 -1.2l1.2 1.2l1.2 -1.2" fill="none" stroke="#438de6" stroke-width="1.2"/></g></svg>
<div class="a flbl" style="left:535px;top:313.3px">Templates</div>
<svg class="a" style="left:751px;top:219.3px" width="80" height="84" viewBox="0 0 80 84"><g transform="scale(0.988 1)"><path d="M0 7C0 3 3 0 7 0H24C26.5 0 27.8 1.2 29 3L31.5 6.6C32.4 8.2 33.4 9.2 35 9.2H72C76.4 9.2 79 11.8 79 16.2V40H0Z" fill="#438de6"/><path d="M0 78.6V26.6C0 23 2.6 21.2 6 21.2H26.5C28.6 21.2 29.6 20.6 31 19.2L33.5 16.8C35 15.4 36 15 38 15H72.4C76.4 15 79 17.6 79 21.6V73.5C79 77 76.6 79.6 73 79.6H6C2.6 79.6 0 77 0 73.5Z" fill="#438de6"/><path d="M0 26.6C0 23 2.6 21.2 6 21.2H26.5C28.6 21.2 29.6 20.6 31 19.2L33.5 16.8C35 15.4 36 15 38 15H72.4C76.4 15 79 17.6 79 21.6V72C79 75.6 76.6 78 73 78H6C2.6 78 0 75.6 0 72Z" fill="#a3c6ef"/></g><g transform="translate(39 49.5)"><rect x="-4.2" y="-6.2" width="14.8" height="15.1" rx="3.4" fill="none" stroke="#438de6" stroke-width="3.1"/><path d="M-12.2 -4.5L-5.6 1.5L-12.2 7.5Z" fill="#438de6"/></g></svg>
<div class="a flbl" style="left:705px;top:313.3px">Videos</div>
</div>
<div id="topbar" class="a">
<div class="a" style="left:53px;top:10px;width:29px;height:8px;border-radius:4px;background:#fff"></div>
<div class="a" style="left:88px;top:11px;width:6.4px;height:6.4px;border-radius:4px;background:#7c7c7c"></div>
<div id="clock" class="a">Nov 28  10:17 AM</div>
<svg class="a" style="left:18.32px;top:2.92px" width="21.76" height="21.76" viewBox="-16 -16 32 32"><g transform="rotate(0)" fill="#e9525a" stroke="#e9525a"><path d="M-1 -1.2C-4.6 -2.2 -8.8 -4 -8.6 -8.4" fill="none" stroke-width="4.619999999999999" stroke-linecap="round"/><path d="M-7.6 -6.8L-3.4 -9.6" fill="none" stroke-width="2.8" stroke-linecap="round"/><circle cx="-2.9" cy="-10.2" r="2.2399999999999998" stroke="none"/><circle cx="-7.2" cy="-11.7" r="2.64" stroke="none"/></g><g transform="rotate(72)" fill="#f7c326" stroke="#f7c326"><path d="M-1 -1.2C-4.6 -2.2 -8.8 -4 -8.6 -8.4" fill="none" stroke-width="4.619999999999999" stroke-linecap="round"/><path d="M-7.6 -6.8L-3.4 -9.6" fill="none" stroke-width="2.8" stroke-linecap="round"/><circle cx="-2.9" cy="-10.2" r="2.2399999999999998" stroke="none"/><circle cx="-7.2" cy="-11.7" r="2.64" stroke="none"/></g><g transform="rotate(144)" fill="#73c54b" stroke="#73c54b"><path d="M-1 -1.2C-4.6 -2.2 -8.8 -4 -8.6 -8.4" fill="none" stroke-width="4.619999999999999" stroke-linecap="round"/><path d="M-7.6 -6.8L-3.4 -9.6" fill="none" stroke-width="2.8" stroke-linecap="round"/><circle cx="-2.9" cy="-10.2" r="2.2399999999999998" stroke="none"/><circle cx="-7.2" cy="-11.7" r="2.64" stroke="none"/></g><g transform="rotate(216)" fill="#3cb5f0" stroke="#3cb5f0"><path d="M-1 -1.2C-4.6 -2.2 -8.8 -4 -8.6 -8.4" fill="none" stroke-width="4.619999999999999" stroke-linecap="round"/><path d="M-7.6 -6.8L-3.4 -9.6" fill="none" stroke-width="2.8" stroke-linecap="round"/><circle cx="-2.9" cy="-10.2" r="2.2399999999999998" stroke="none"/><circle cx="-7.2" cy="-11.7" r="2.64" stroke="none"/></g><g transform="rotate(288)" fill="#1d78d8" stroke="#1d78d8"><path d="M-1 -1.2C-4.6 -2.2 -8.8 -4 -8.6 -8.4" fill="none" stroke-width="4.619999999999999" stroke-linecap="round"/><path d="M-7.6 -6.8L-3.4 -9.6" fill="none" stroke-width="2.8" stroke-linecap="round"/><circle cx="-2.9" cy="-10.2" r="2.2399999999999998" stroke="none"/><circle cx="-7.2" cy="-11.7" r="2.64" stroke="none"/></g></svg>
<svg class="a" style="left:1189px;top:5px" width="18" height="18" viewBox="0 0 18 18" fill="#fff"><rect x="5.9" y="1.1" width="6.2" height="5.3" rx="0.5"/><rect x="8.2" y="6" width="1.6" height="3"/><rect x="2.6" y="8.7" width="12.8" height="1.7"/><rect x="3.2" y="9" width="1.6" height="2.8"/><rect x="13.2" y="9" width="1.6" height="2.8"/><rect x="1" y="11.3" width="6" height="5.6" rx="0.5"/><rect x="10.9" y="11.3" width="6.1" height="5.6" rx="0.5"/></svg>
<svg class="a" style="left:1217px;top:6px" width="18" height="17" viewBox="0 0 18 17" fill="#fff"><path d="M0.9 5.2H3.4L7.9 0.9V15.3L3.4 11H0.9Z"/><path d="M11.2 5C12 5.9 12.4 6.9 12.4 8.1C12.4 9.3 12 10.3 11.2 11.2" fill="none" stroke="#fff" stroke-width="1.8" stroke-linecap="round"/><path d="M14.4 2.2C15.7 3.8 16.5 5.8 16.5 8.1C16.5 10.4 15.7 12.4 14.4 14" fill="none" stroke="#fff" stroke-width="1.8" stroke-linecap="round"/></svg>
<svg class="a" style="left:1245px;top:5px" width="18" height="18" viewBox="0 0 18 18" fill="none" stroke="#fff" stroke-width="2.1" stroke-linecap="round"><path d="M5.3 4.3C3.3 5.4 2.8 7.2 2.8 9.05C2.8 12.4 5.5 15.1 8.85 15.1C12.2 15.1 14.9 12.4 14.9 9.05C14.9 7.2 14.4 5.4 12.4 4.3"/><path d="M8.85 1.9V8.2"/></svg>
</div>
</body></html>
